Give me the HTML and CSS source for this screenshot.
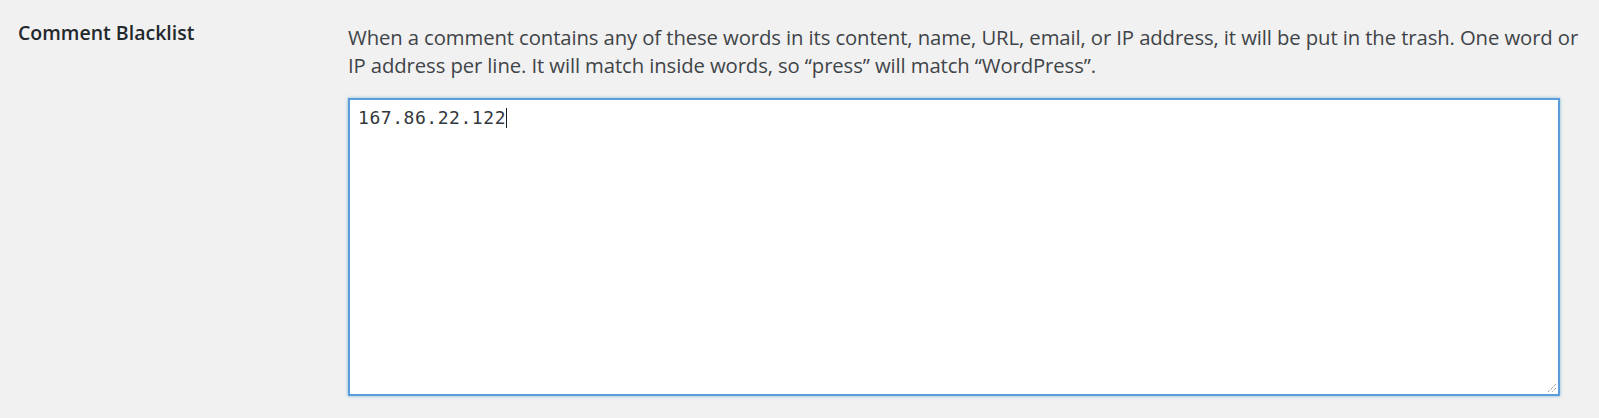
FILE: index.html
```html
<!DOCTYPE html>
<html lang="en">
<head>
<meta charset="utf-8">
<title>Discussion Settings</title>
<link rel="stylesheet" href="styles.css">
</head>
<body>
<div class="form-table">
  <div class="row">
    <div class="th"><label for="blacklist_keys">Comment Blacklist</label></div>
    <div class="td">
      <p class="description">When a comment contains any of these words in its content, name, URL, email, or IP address, it will be put in the trash. One word or<br>IP address per line. It will match inside words, so “press” will match “WordPress”.</p>
      <div class="textarea" id="blacklist_keys" role="textbox" aria-multiline="true"><span class="value">167.86.22.122</span><span class="caret"></span><svg class="grip" width="10" height="10" viewBox="0 0 10 10" aria-hidden="true"><path d="M9 1 L1 9 M9 5 L5 9" stroke="#777" stroke-width="1" stroke-dasharray="1 1" fill="none"/></svg></div>
    </div>
  </div>
</div>
</body>
</html>
```

FILE: styles.css
```css
html, body {
  margin: 0;
  padding: 0;
  background: #f1f1f1;
}
body {
  font-family: "Open Sans", "Noto Sans", sans-serif;
  color: #444;
  width: 1599px;
  height: 418px;
  overflow: hidden;
}
.form-table {
  padding-left: 18px;
}
.row {
  display: grid;
  grid-template-columns: 330px 1212px;
  align-items: start;
}
.th {
  padding-top: 21px;
  font-size: 19.5px;
  line-height: 24px;
  font-weight: 600;
  color: #23282d;
}
.td {
  padding-top: 23px;
}
.description {
  margin: 0 0 19px 0;
  font-size: 20.3px;
  line-height: 28px;
  letter-spacing: -0.1px;
  white-space: nowrap;
  color: #3f4448;
}
.textarea {
  position: relative;
  box-sizing: border-box;
  height: 298px;
  background: #fff;
  border: 2px solid #5b9dd9;
  box-shadow: 0 0 3px rgba(30, 140, 190, 0.55);
  padding: 4px 8px;
  font-family: "DejaVu Sans Mono", "Liberation Mono", monospace;
  font-size: 18px;
  letter-spacing: 0.55px;
  line-height: 28px;
  color: #32373c;
}
.caret {
  display: inline-block;
  width: 1px;
  height: 20px;
  background: #1e1e1e;
  vertical-align: -4px;
  margin-left: -0.5px;
}
.grip {
  position: absolute;
  right: 1px;
  bottom: 1px;
}
```
